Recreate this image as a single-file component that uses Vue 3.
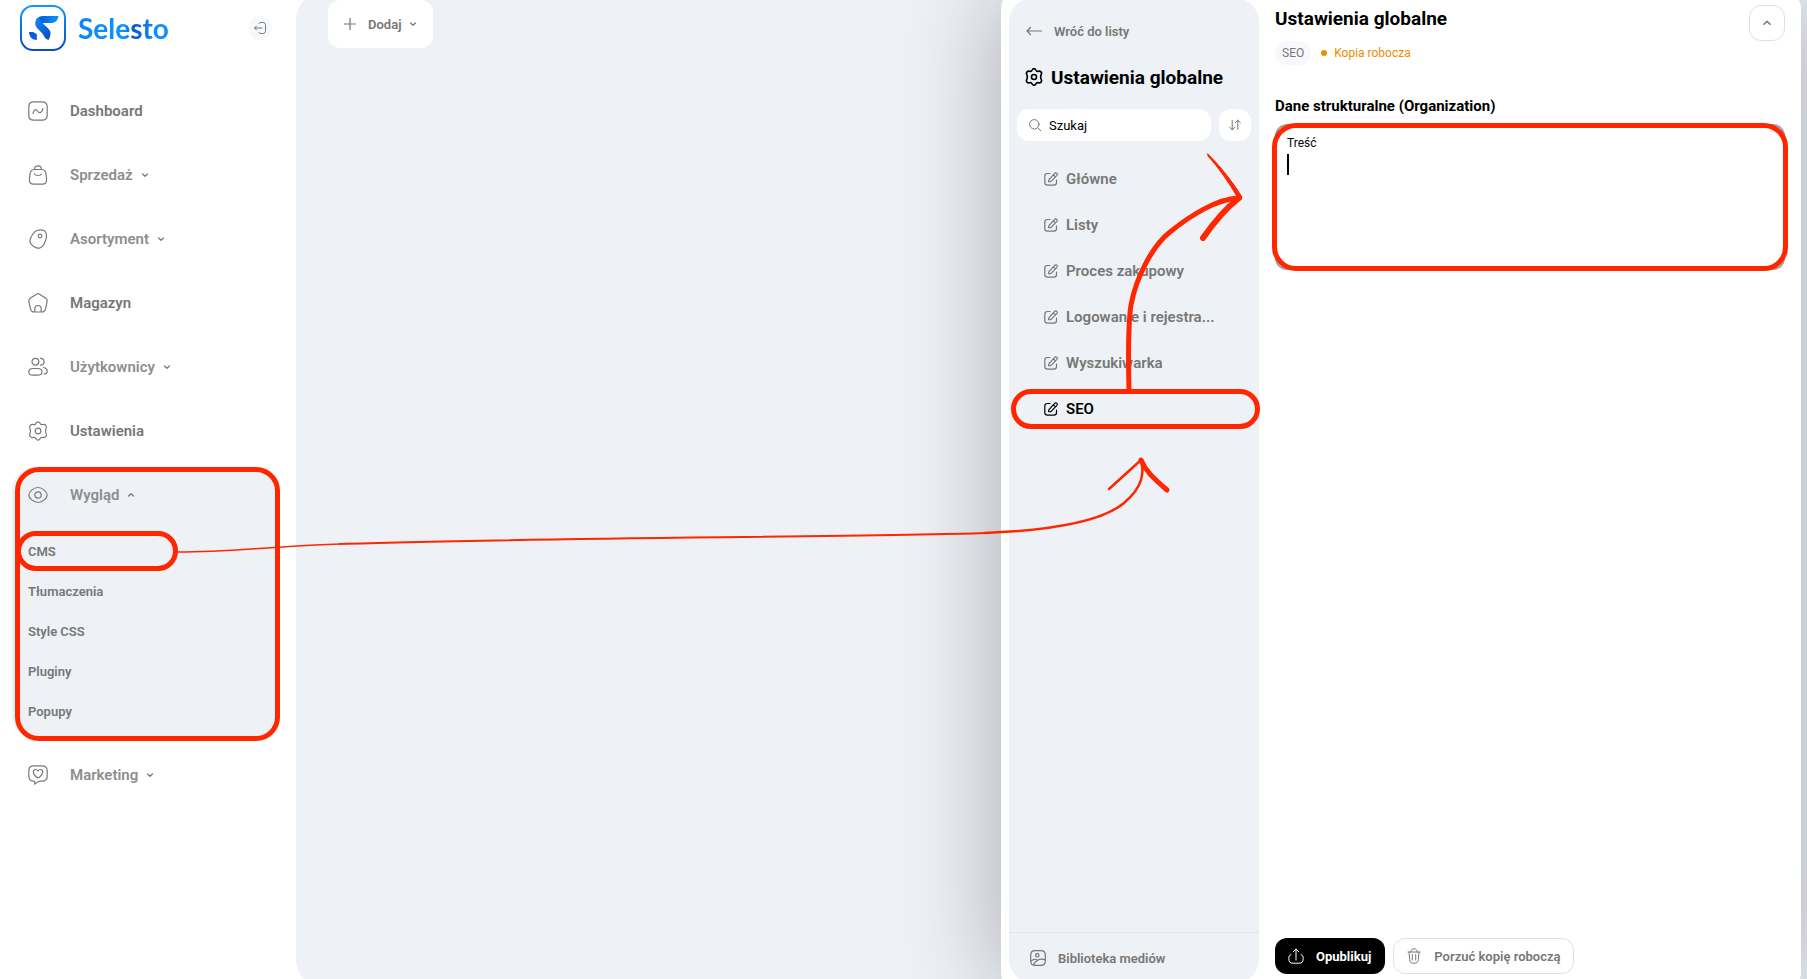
<template>
  <div class="app">
    <!-- Sidebar -->
    <aside class="sidebar">
      <header class="brand">
        <a href="#" class="brand-link">
          <svg class="brand-mark" viewBox="0 0 46 46" fill="none">
            <defs>
              <linearGradient id="mark" x1="0" y1="0" x2="0" y2="1">
                <stop offset="0" stop-color="#0a9bff" />
                <stop offset="1" stop-color="#0a4cc4" />
              </linearGradient>
              <linearGradient id="wing" x1="0" y1="0" x2="1" y2="0">
                <stop offset="0" stop-color="#0a50cc" />
                <stop offset="1" stop-color="#0a94ff" />
              </linearGradient>
              <linearGradient id="body" x1="0" y1="0" x2="1" y2="1">
                <stop offset="0" stop-color="#0a8cff" />
                <stop offset="1" stop-color="#0a45b8" />
              </linearGradient>
            </defs>
            <rect x="1" y="1" width="44" height="44" rx="12" stroke="url(#mark)" stroke-width="2" />
            <path d="M38.500 11C38 15.500 35 18 31 18H20.500L16 15C17.500 12.300 20 11 23 11Z" fill="url(#wing)" />
            <path d="M16.500 14.500C17.500 13 19 12.500 20 14C21 16.500 22.500 18 25 20.500C28 23.500 31 25.500 30.500 29C30.200 31.500 29.300 33.500 28.500 35C26 34.500 24.500 32.500 23 29.500C21.500 26.500 15.500 23.500 15.300 19C15.200 17 15.500 16 16.500 14.500Z" fill="url(#body)" />
            <path d="M9 27H13L16.800 29V35C12.500 35 9 32 9 27Z" fill="#0a5be0" />
          </svg>
          <span class="brand-name">Selesto</span>
        </a>
        <button class="collapse" type="button" aria-label="Zwiń menu">
          <svg class="icon-12" viewBox="0 0 12 12"><path d="M4.800 1.500C5.200.8 5.900.5 7 .5H8.500C10.700.5 11.500 1.300 11.500 3.500V8.500C11.500 10.700 10.700 11.500 8.500 11.500H7C5.900 11.500 5.200 11.200 4.800 10.500M8 6H.5M2.500 4 .5 6 2.500 8" /></svg>
        </button>
      </header>

      <nav class="menu">
        <div
          v-for="item in menu"
          :key="item.label"
          class="group"
          :class="{ open: item.children }"
        >
          <a href="#" class="menu-item" :class="{ muted: item.expandable }">
            <svg class="icon-20" viewBox="0 0 20 20"><path :d="icons[item.icon]" /></svg>
            <span>{{ item.label }}</span>
            <svg
              v-if="item.expandable"
              class="chevron"
              :class="{ up: item.children }"
              viewBox="0 0 8 8"
            ><path d="M1.500 3 4 5.300 6.500 3" /></svg>
          </a>
          <ul v-if="item.children" class="submenu">
            <li v-for="child in item.children" :key="child">
              <a href="#" :class="{ marked: child === 'CMS' }">{{ child }}</a>
            </li>
          </ul>
        </div>
      </nav>
    </aside>

    <!-- Workspace -->
    <main class="workspace">
      <button class="add-btn" type="button">
        <svg class="icon-12" viewBox="0 0 12 12"><path d="M6 0V12M0 6H12" /></svg>
        Dodaj
        <svg class="chevron" viewBox="0 0 8 8"><path d="M1.500 3 4 5.300 6.500 3" /></svg>
      </button>
    </main>

    <!-- CMS drawer -->
    <section class="drawer">
      <div class="panel">
        <a href="#" class="back">
          <svg class="icon-16" viewBox="0 0 16 16"><path d="M16 8H1M4.500 4.500 1 8 4.500 11.500" /></svg>
          Wróć do listy
        </a>
        <h2 class="panel-title">
          <svg class="icon-18" viewBox="0 0 20 20"><path :d="icons.gear" /></svg>
          Ustawienia globalne
        </h2>
        <div class="tools">
          <label class="search">
            <svg class="icon-12" viewBox="0 0 12 12"><circle cx="5.300" cy="5.300" r="4.700" /><path d="M8.800 8.800 11.800 11.800" /></svg>
            <input v-model="query" type="text" placeholder="Szukaj" aria-label="Szukaj" />
          </label>
          <button class="sort" type="button" aria-label="Sortuj">
            <svg class="icon-12" viewBox="0 0 12 12"><path d="M3.200 1.500V10.800M.6 8.300 3.200 10.800 5.800 8.300M8.800 10.500V1.200M6.200 3.700 8.800 1.200 11.400 3.700" /></svg>
          </button>
        </div>
        <ul class="pages">
          <li v-for="page in visiblePages" :key="page">
            <a href="#" class="page" :class="{ active: page === current, marked: page === current }">
              <svg class="icon-14" viewBox="0 0 14 14"><path d="M6 1.500H3.500C1.500 1.500.8 2.200.8 4.200V10.500C.8 12.500 1.500 13.200 3.500 13.200H9.800C11.800 13.200 12.500 12.500 12.500 10.500V8M5.200 7.300 10.400 1.600C11.200.7 12 .6 12.800 1.300C13.500 2 13.500 2.900 12.700 3.700L7.300 9.200C6.500 9.900 5.500 9.800 4.600 9.700C4.500 8.800 4.600 8 5.200 7.300ZM9.600 2.700C9.900 3.800 10.600 4.400 11.600 4.700" /></svg>
              {{ page }}
            </a>
          </li>
        </ul>
        <a href="#" class="library">
          <svg class="icon-16" viewBox="0 0 16 16"><path d="M5 .7H11C14 .7 15.300 2 15.300 5V11C15.300 14 14 15.300 11 15.300H5C2 15.300.7 14 .7 11V5C.7 2 2 .7 5 .7ZM9 5.300A1.700 1.700 0 1 1 5.600 5.300A1.700 1.700 0 1 1 9 5.300ZM1 11.500C3 9 5.500 8.500 7.500 10.500M3.500 15C4.500 11.500 9.500 7.500 15.200 10" /></svg>
          Biblioteka mediów
        </a>
      </div>

      <div class="editor">
        <header class="editor-head">
          <div>
            <h1>Ustawienia globalne</h1>
            <div class="status">
              <span class="chip">SEO</span>
              <span class="draft">Kopia robocza</span>
            </div>
          </div>
          <button class="fold" type="button" aria-label="Zwiń">
            <svg class="chevron up" viewBox="0 0 8 8"><path d="M1.500 3 4 5.300 6.500 3" /></svg>
          </button>
        </header>

        <h3>Dane strukturalne (Organization)</h3>
        <div class="field marked">
          <label for="content">Treść</label>
          <textarea id="content" v-model="content"></textarea>
          <span class="caret"></span>
        </div>

        <footer class="actions">
          <button class="publish" type="button">
            <svg class="icon-16" viewBox="0 0 16 16"><path d="M8 12V1M5.200 3.800 8 1 10.800 3.800M3 6.500C1.300 7.300.8 8.300.8 10.500C.8 14 2 15.200 5 15.200H11C14 15.200 15.200 14 15.200 10.500C15.200 8.300 14.700 7.300 13 6.500" /></svg>
            Opublikuj
          </button>
          <button class="discard" type="button">
            <svg class="icon-16" viewBox="0 0 16 16"><path d="M2 4H14M5 4C5 1.800 6 .8 8 .8C10 .8 11 1.800 11 4M3 4 3.700 11.500C4 14.300 4.800 15.200 8 15.200C11.200 15.200 12 14.300 12.300 11.500L13 4M6.300 6.500V12M9.700 6.500V12" /></svg>
            Porzuć kopię roboczą
          </button>
        </footer>
      </div>
    </section>

    <!-- Guide arrows -->
    <svg class="arrows" viewBox="0 0 1807 979">
      <path d="M178 552C230 552 260 547 340 544" stroke-width="1.500" />
      <path d="M340 544C500 538 880 537 985 533" stroke-width="2" />
      <path d="M985 533C1060 530 1105 519 1124 503C1144 486 1144 472 1141 460" stroke-width="2.500" />
      <path d="M1109 489 1141 460" stroke-width="2.500" />
      <path d="M1141 460C1145 470 1152 477 1167 490" stroke-width="5" />
      <path d="M1129 390C1128 350 1128 325 1131 305C1136 278 1152 246 1170 232C1192 214 1218 199 1238 198" stroke-width="5" />
      <path d="M1239 198C1225 209 1212 225 1203 238" stroke-width="6" />
      <path class="solid" d="M1208 154C1221 167 1232 181 1242 197L1238 198C1229 183 1219 168 1208 156Z" />
    </svg>
  </div>
</template>

<script setup>
import { ref, computed } from "vue";

const query = ref("");
const content = ref("");
const current = ref("SEO");

const icons = {
  chart: "M6 .8H14C17.800.8 19.200 2.200 19.200 6V14C19.200 17.800 17.800 19.200 14 19.200H6C2.200 19.200.8 17.800.8 14V6C.8 2.200 2.200.8 6 .8ZM5 12.500C6 8.500 7.700 7.500 9.500 10C11.500 12.800 13.500 12 15 7.500",
  bag: "M6 4.500H14C16.500 4.500 17.500 6 18 9L18.500 13C19 17.500 17.800 19.200 14 19.200H6C2.200 19.200 1 17.500 1.500 13L2 9C2.500 6 3.500 4.500 6 4.500ZM6.500 4.500C6.500 2 7.500.8 10 .8C12.500.8 13.500 2 13.500 4.500M6.500 9C8 11 12 11 13.500 9",
  tag: "M9 1.500C11 .8 14 .6 16 1.500C18 2.500 18.500 5 18.500 8C18.300 11 17.500 12.500 15.500 16C13.500 19.500 10 20 6.500 18C2 15.500 1 13 2.500 9.500C4 6 6.500 2.500 9 1.500ZM13.800 7A1.800 1.800 0 1 1 10.200 7A1.800 1.800 0 1 1 13.800 7Z",
  home: "M8.500 1.200C9.500.5 10.500.5 11.500 1.200L17.500 5C19 6 19.500 7.300 19 9.200L17.500 15.800C17 18 16 19 13.500 19H6.500C4 19 3 18 2.500 15.800L1 9.200C.5 7.300 1 6 2.500 5ZM6.800 19V16C6.800 13.500 8 12.500 10 12.500C12 12.500 13.200 13.500 13.200 16V19",
  users: "M10.800 4.700A3.400 3.400 0 1 1 4 4.700A3.400 3.400 0 1 1 10.800 4.700ZM12.500 1.300C14.500 1.300 16 2.700 16 4.700C16 6.700 14.500 8.100 12.500 8.100M5 11.500H9.500C12.500 11.500 14 12.700 14 15C14 17.200 12.500 18.200 9.500 18.200H5C2 18.200.8 17.200.8 15C.8 12.700 2 11.500 5 11.500ZM15.500 10.500C18 11 19.200 12.500 19.200 14.200C19.200 15.800 18 17 16 17",
  gear: "M8 2.200C8.700.3 11.300.3 12 2.200C12.600 3.500 13.800 4 15.200 3.500C17.200 3 19 5 18.200 6.900C17.300 8.700 17.300 11.300 18.200 13.100C19 15 17.200 17 15.200 16.500C13.800 16 12.600 16.500 12 17.800C11.300 19.700 8.700 19.700 8 17.800C7.400 16.500 6.200 16 4.800 16.500C2.800 17 1 15 1.800 13.100C2.700 11.300 2.700 8.700 1.800 6.900C1 5 2.800 3 4.800 3.500C6.200 4 7.400 3.500 8 2.200ZM12.800 10A2.800 2.800 0 1 1 7.200 10A2.800 2.800 0 1 1 12.800 10Z",
  eye: "M10 2.500C14.500 2.500 19.200 7 19.200 10C19.200 13 14.500 17.500 10 17.500C5.500 17.500.8 13 .8 10C.8 7 5.500 2.500 10 2.500ZM13.200 10A3.200 3.200 0 1 1 6.800 10A3.200 3.200 0 1 1 13.200 10Z",
  heart: "M6 .8H14C17.800.8 19.200 2.200 19.200 6V11C19.200 14.800 17.800 16.200 14 16.200H12C9 16.200 9 18.500 6.500 19.200C7.500 17 6.500 16.200 5.500 16.200C2 16 .8 14.500.8 11V6C.8 2.200 2.200.8 6 .8ZM10 13C4 9.500 4.500 4.500 7.500 4.500C9 4.500 9.600 5.300 10 6C10.400 5.300 11 4.500 12.500 4.500C15.500 4.500 16 9.500 10 13Z",
};

const menu = [
  { label: "Dashboard", icon: "chart" },
  { label: "Sprzedaż", icon: "bag", expandable: true },
  { label: "Asortyment", icon: "tag", expandable: true },
  { label: "Magazyn", icon: "home" },
  { label: "Użytkownicy", icon: "users", expandable: true },
  { label: "Ustawienia", icon: "gear" },
  {
    label: "Wygląd",
    icon: "eye",
    expandable: true,
    children: ["CMS", "Tłumaczenia", "Style CSS", "Pluginy", "Popupy"],
  },
  { label: "Marketing", icon: "heart", expandable: true },
];

const pages = [
  "Główne",
  "Listy",
  "Proces zakupowy",
  "Logowanie i rejestra...",
  "Wyszukiwarka",
  "SEO",
];

const visiblePages = computed(() =>
  pages.filter((page) => page.toLowerCase().includes(query.value.toLowerCase()))
);
</script>

<style>
body {
  margin: 0;
  background: #ffffff;
}
</style>

<style scoped>
.app {
  --red: #ff2600;
  --panel: #eef1f6;
  position: relative;
  display: flex;
  height: 100vh;
  overflow: hidden;
  font-family: Roboto, "Liberation Sans", sans-serif;
  font-size: 13px;
  font-weight: 600;
  color: #777777;
}

.app * {
  box-sizing: border-box;
}

a {
  color: inherit;
  text-decoration: none;
}

ul {
  list-style: none;
  margin: 0;
  padding: 0;
}

h1,
h2,
h3 {
  margin: 0;
  color: #000000;
}

button,
input,
textarea {
  font: inherit;
  color: inherit;
  border: none;
  padding: 0;
  background: none;
}

button {
  display: flex;
  align-items: center;
  justify-content: center;
  cursor: pointer;
}

svg {
  flex: none;
  fill: none;
  stroke: currentColor;
  stroke-width: 1.2;
  stroke-linecap: round;
  stroke-linejoin: round;
}

.icon-12 {
  width: 12px;
  height: 12px;
}

.icon-14 {
  width: 14px;
  height: 14px;
}

.icon-16 {
  width: 16px;
  height: 16px;
}

.icon-18 {
  width: 18px;
  height: 18px;
}

.icon-20 {
  width: 20px;
  height: 20px;
}

.chevron {
  width: 8px;
  height: 8px;
}

.chevron.up {
  transform: rotate(180deg);
}

/* Red outlines around the steps */
.marked {
  position: relative;
}

.marked::after {
  content: "";
  position: absolute;
  inset: 0;
  border: 5px solid var(--red);
  border-radius: 20px;
  pointer-events: none;
}

/* Sidebar */
.sidebar {
  flex: none;
  width: 296px;
}

.brand {
  display: flex;
  align-items: center;
  justify-content: space-between;
  padding: 5px 24px 32px 20px;
}

.brand-link {
  display: flex;
  align-items: center;
  gap: 12px;
}

.brand-mark {
  width: 46px;
  height: 46px;
  stroke: none;
}

.brand-name {
  font-family: Lato, sans-serif;
  font-size: 28px;
  font-weight: 700;
  line-height: 44px;
  background: linear-gradient(90deg, #0a84ff, #0a94ff 50%, #0a55d0 62%, #0a90ff 85%);
  -webkit-background-clip: text;
  background-clip: text;
  -webkit-text-fill-color: transparent;
}

.collapse {
  width: 24px;
  height: 24px;
  border-radius: 50%;
  background: #f7f8fb;
}

.collapse svg {
  stroke-width: 1;
}

.menu {
  display: flex;
  flex-direction: column;
  gap: 8px;
  padding: 0 16px 0 12px;
}

.group {
  position: relative;
  border-radius: 24px;
}

.menu-item {
  display: flex;
  align-items: center;
  height: 56px;
  padding-left: 16px;
  font-size: 15px;
}

.menu-item span {
  margin-left: 22px;
}

.menu-item .chevron {
  margin-left: 8px;
}

.menu-item.muted span {
  color: #8e8e8e;
}

.group.open {
  background: var(--panel);
}

.group.open::after {
  content: "";
  position: absolute;
  inset: 0 0 -2px 3px;
  border: 5px solid var(--red);
  border-radius: 24px;
  pointer-events: none;
}

.submenu {
  padding: 8px 0;
}

.submenu a {
  display: flex;
  align-items: center;
  height: 40px;
  padding-left: 16px;
}

.submenu .marked::after {
  left: 4px;
  right: 102px;
}

/* Workspace */
.workspace {
  flex: 1;
  display: flex;
  align-items: flex-start;
  margin: -8px 0;
  padding: 8px 32px;
  border-radius: 28px 0 0 28px;
  background: var(--panel);
}

.add-btn {
  gap: 12px;
  height: 48px;
  padding: 0 16px;
  border-radius: 12px;
  background: #ffffff;
}

.add-btn .chevron {
  margin-left: -4px;
}

/* Drawer */
.drawer {
  position: absolute;
  top: -8px;
  right: 6px;
  bottom: -10px;
  display: flex;
  width: 800px;
  padding: 6px 16px 6px 8px;
  border-radius: 16px;
  background: #ffffff;
  box-shadow: 0 0 100px rgba(0, 0, 0, 0.3);
}

.panel {
  flex: none;
  display: flex;
  flex-direction: column;
  width: 250px;
  border-radius: 24px;
  background: var(--panel);
}

.back {
  display: flex;
  align-items: center;
  gap: 12px;
  height: 32px;
  margin-top: 17px;
  padding-left: 17px;
}

.panel-title {
  display: flex;
  align-items: center;
  gap: 8px;
  height: 32px;
  margin-top: 14px;
  padding-left: 16px;
  font-size: 19px;
}

.panel-title svg {
  stroke-width: 1.8;
}

.tools {
  display: flex;
  gap: 8px;
  margin-top: 16px;
  padding: 0 8px;
}

.search {
  flex: 1;
  display: flex;
  align-items: center;
  gap: 8px;
  height: 32px;
  padding: 0 12px;
  border-radius: 12px;
  background: #ffffff;
}

.search input {
  width: 100%;
  min-width: 0;
  font-weight: 400;
  outline: none;
}

.search input::placeholder {
  color: #000000;
}

.search svg,
.sort svg {
  stroke-width: 1;
}

.sort {
  width: 32px;
  height: 32px;
  border-radius: 12px;
  background: #ffffff;
}

.pages {
  display: flex;
  flex: 1;
  flex-direction: column;
  gap: 6px;
  padding: 18px 8px 0;
}

.page {
  display: flex;
  align-items: center;
  gap: 8px;
  height: 40px;
  padding-left: 27px;
  font-size: 15px;
  white-space: nowrap;
}

.page.active {
  color: #000000;
}

.page.marked::after {
  left: -6px;
  right: -9px;
}

.library {
  display: flex;
  align-items: center;
  gap: 12px;
  height: 51px;
  padding-left: 21px;
  border-top: 1px solid #e2e5ea;
}

/* Editor */
.editor {
  flex: 1;
  display: flex;
  flex-direction: column;
  padding: 7px 0 9px 16px;
}

.editor-head {
  display: flex;
  justify-content: space-between;
  align-items: flex-start;
}

.editor h1 {
  font-size: 19px;
  line-height: 28px;
}

.status {
  display: flex;
  align-items: center;
  gap: 10px;
  margin-top: 8px;
  font-size: 12px;
  font-weight: 400;
}

.chip {
  height: 24px;
  padding: 0 7px;
  line-height: 24px;
  border-radius: 12px;
  background: #f7f8fb;
}

.draft {
  display: flex;
  align-items: center;
  gap: 7px;
  color: #f08c00;
}

.draft::before {
  content: "";
  width: 6px;
  height: 6px;
  border-radius: 50%;
  background: #f08c00;
}

.fold {
  width: 36px;
  height: 36px;
  border: 1px solid #e0e0e0;
  border-radius: 12px;
}

.fold .chevron {
  width: 10px;
  height: 10px;
}

.editor h3 {
  margin-top: 29px;
  font-size: 15px;
  font-weight: 700;
  line-height: 24px;
}

.field {
  display: flex;
  flex-direction: column;
  height: 146px;
  margin-top: 6px;
  padding: 9px 10px;
  border: 2px solid #a0a0a0;
  border-radius: 12px;
}

.field::after {
  inset: -3px -5px -3px -5px;
  border-radius: 24px;
}

.field label {
  font-size: 12px;
  font-weight: 400;
  line-height: 16px;
  color: #000000;
}

.field textarea {
  flex: 1;
  margin-top: 4px;
  resize: none;
  outline: none;
  font-weight: 400;
  line-height: 20px;
  color: #000000;
}

.caret {
  position: absolute;
  top: 28px;
  left: 10px;
  width: 2px;
  height: 21px;
  background: #000000;
}

.actions {
  display: flex;
  gap: 8px;
  margin-top: auto;
}

.actions button {
  gap: 12px;
  height: 36px;
  border-radius: 12px;
}

.publish {
  padding: 0 14px 0 13px;
  font-weight: 700;
  color: #ffffff;
  background: #000000;
}

.actions .discard {
  padding: 0 12px;
  border: 1px solid #e0e0e0;
}

.publish svg,
.discard svg {
  stroke-width: 1;
}

/* Arrows */
.arrows {
  position: absolute;
  top: 0;
  left: 0;
  width: 100%;
  height: 100%;
  stroke: var(--red);
  pointer-events: none;
}

.arrows .solid {
  fill: var(--red);
  stroke-width: 1;
}
</style>
